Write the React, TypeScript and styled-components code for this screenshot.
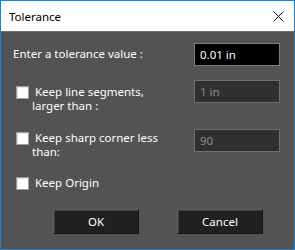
import React from "react";
import styled, { createGlobalStyle } from "styled-components";

const Global = createGlobalStyle`
  html, body { margin: 0; padding: 0; background: #ffffff; }
  body { font-family: "Noto Sans", "Open Sans", sans-serif; }
`;

const Window = styled.div`
  width: 295px;
  height: 250px;
  box-sizing: border-box;
  border: 1px solid #1883d7;
  display: flex;
  flex-direction: column;
  background: #535353;
`;

const TitleBar = styled.div`
  height: 30px;
  flex: 0 0 30px;
  background: #ffffff;
  display: flex;
  align-items: center;
  justify-content: space-between;
  padding-left: 8px;
  padding-right: 10px;
  box-sizing: border-box;
`;

const Title = styled.span`
  font-size: 11.5px;
  color: #000000;
`;

const Body = styled.div`
  flex: 1;
  border-top: 1px solid #6e6e6e;
  display: flex;
  flex-direction: column;
  padding: 0 14px 0 12px;
`;

const Row = styled.div<{ $top: number }>`
  display: flex;
  align-items: flex-start;
  justify-content: space-between;
  margin-top: ${(p) => p.$top}px;
`;

const Label = styled.span`
  font-size: 11.5px;
  color: #ffffff;
  line-height: 22px;
`;

const Check = styled.label<{ $offset: number }>`
  display: flex;
  align-items: flex-start;
  gap: 3px;
  margin-left: 3px;
  margin-top: ${(p) => p.$offset}px;
  font-size: 11.5px;
  color: #ffffff;
  line-height: 14px;
`;

const Box = styled.span`
  width: 13px;
  height: 13px;
  flex: 0 0 13px;
  box-sizing: border-box;
  background: #ffffff;
  border: 1px solid #9d9d9d;
  box-shadow: inset 1px 1px 0 #e3e3e3;
`;

const CheckText = styled.span`
  text-indent: 3px;
  margin-top: -1px;
`;

const Input = styled.div<{ $disabled?: boolean }>`
  width: 86px;
  height: 23px;
  box-sizing: border-box;
  border: 1px solid ${(p) => (p.$disabled ? "#6f6f6f" : "#7e7e7e")};
  background: ${(p) => (p.$disabled ? "#303030" : "#000000")};
  color: ${(p) => (p.$disabled ? "#8b8b8b" : "#ffffff")};
  font-size: 11.5px;
  line-height: 21px;
  padding-left: 5px;
`;

const Buttons = styled.div`
  display: flex;
  gap: 38px;
  padding-left: 40px;
  margin-top: 19px;
`;

const Button = styled.div`
  width: 86px;
  height: 25px;
  box-sizing: border-box;
  background: #202020;
  border: 1px solid #5f5f5f;
  border-right-color: #151515;
  border-bottom-color: #151515;
  box-shadow: inset 1px 1px 0 #3a3a3a;
  color: #ffffff;
  font-size: 11.5px;
  display: flex;
  align-items: center;
  justify-content: center;
`;

const CloseIcon = () => (
  <svg width="11" height="11" viewBox="0 0 11 11">
    <path d="M0.5 0.5 L10.5 10.5 M10.5 0.5 L0.5 10.5" stroke="#111" strokeWidth="1" fill="none" />
  </svg>
);

export default function App() {
  return (
    <>
      <Global />
      <Window>
        <TitleBar>
          <Title>Tolerance</Title>
          <CloseIcon />
        </TitleBar>
        <Body>
          <Row $top={11}>
            <Label>Enter a tolerance value :</Label>
            <Input>0.01 in</Input>
          </Row>
          <Row $top={14}>
            <Check $offset={6}>
              <Box />
              <CheckText>
                Keep line segments,
                <br />
                larger than :
              </CheckText>
            </Check>
            <Input $disabled>1 in</Input>
          </Row>
          <Row $top={16}>
            <Check $offset={3}>
              <Box />
              <CheckText>
                Keep sharp corner less
                <br />
                than:
              </CheckText>
            </Check>
            <Input $disabled>90</Input>
          </Row>
          <Row $top={18}>
            <Check $offset={0}>
              <Box />
              <CheckText>Keep Origin</CheckText>
            </Check>
          </Row>
          <Buttons>
            <Button>OK</Button>
            <Button>Cancel</Button>
          </Buttons>
        </Body>
      </Window>
    </>
  );
}
